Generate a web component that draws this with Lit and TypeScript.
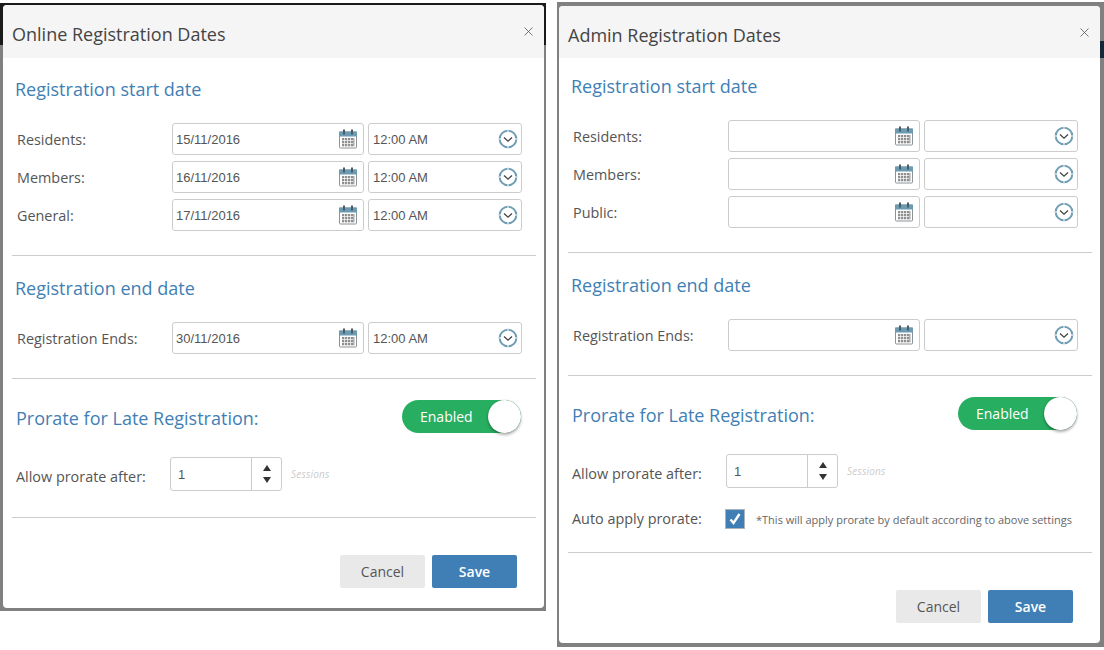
import { LitElement, html, css, nothing, svg } from "lit";
import { customElement, property } from "lit/decorators.js";

const calendarIcon = svg`<svg class="ico" width="20" height="20" viewBox="0 0 20 20">
  <rect x="1.5" y="3" width="17" height="16" rx="1" fill="#fff" stroke="#8c9499"/>
  <rect x="1" y="2.5" width="18" height="5" fill="#6b9ab3"/>
  <rect x="5" y="0.5" width="2" height="5" fill="#4f5b63"/>
  <rect x="13" y="0.5" width="2" height="5" fill="#4f5b63"/>
  <g fill="#8f8f8f">
    ${[4, 7, 10, 13].flatMap((x) => [9, 12, 15].map((y) => svg`<rect x="${x}" y="${y}" width="2.3" height="2.3"/>`))}
    <rect x="15.4" y="9" width="1" height="8.3"/>
  </g>
</svg>`;

const clockIcon = svg`<svg class="ico" width="20" height="20" viewBox="0 0 20 20">
  <circle cx="10" cy="10" r="8.3" fill="#fff" stroke="#6f9db4" stroke-width="2"/>
  <path d="M10 1v2M10 17v2M1 10h2M17 10h2" stroke="#fff" stroke-width="1"/>
  <path d="M6 8.6l4 3.6 4-3.6" fill="none" stroke="#444" stroke-width="1.3"/>
</svg>`;

@customElement("reg-dialog")
class RegDialog extends LitElement {
  @property() heading = "";
  @property() variant = "online";
  @property({ type: Array }) starts: [string, string, string][] = [];
  @property({ type: Array }) end: [string, string, string] = ["", "", ""];

  static styles = css`
    :host { display: block; }
    * { box-sizing: border-box; }
    .frame { font-family: "Open Sans", sans-serif; color: #555; }
    .frame.online {
      width: 546px;
      padding: 2px 2px 3px 3px;
      background: linear-gradient(#1a1a1a 0 42px, #808080 42px);
    }
    .frame.admin {
      width: 547px;
      padding: 4px 4px 4px 2px;
      background: linear-gradient(#14283a, #14283a) right 39px / 4px 17px no-repeat, #808080;
    }
    .inner { background: #fff; border-radius: 4px; overflow: hidden; }
    .head {
      display: flex;
      justify-content: space-between;
      align-items: flex-start;
      background: #f5f5f5;
      padding: 17px 11px 0 9px;
    }
    .online .head { height: 53px; }
    .admin .head { height: 52px; }
    .title { font-size: 18px; line-height: 25px; color: #444; }
    .close { width: 9px; height: 9px; margin-top: 5px; display: block; }
    .body { padding: 19px 8px 0 9px; }
    .admin .body { padding-top: 16px; }
    h3 {
      margin: 0 0 22px;
      font-size: 18px;
      line-height: 24px;
      font-weight: 400;
      color: #3f7fb5;
      padding-left: 3px;
    }
    .rows { display: flex; flex-direction: column; gap: 6px; }
    .row {
      display: grid;
      grid-template-columns: 160px 192px 158px;
      align-items: center;
    }
    .row > .time { margin-left: 4px; }
    .lbl { font-size: 14.4px; padding-left: 5px; color: #555; }
    .field {
      height: 32px;
      border: 1px solid #ccc;
      border-radius: 3px;
      display: flex;
      align-items: center;
      justify-content: space-between;
      padding: 0 3px 0 4px;
      font: 13px "Liberation Sans", sans-serif;
      color: #555;
      background: #fff;
    }
    .field.date { padding-right: 5px; padding-left: 3px; }
    .ico { display: block; }
    hr { border: 0; border-top: 1px solid #ccc; margin: 24px 0 0; height: 1px; }
    .sec { margin-top: 20px; }
    .pro {
      display: flex;
      justify-content: space-between;
      align-items: flex-start;
      margin-top: 21px;
      padding-right: 15px;
    }
    .pro h3 { margin: 6px 0 0; padding-left: 4px; }
    .toggle {
      width: 119px;
      height: 33px;
      border-radius: 17px;
      background: #27ae60;
      color: #fff;
      font-size: 14px;
      display: flex;
      align-items: center;
      justify-content: space-between;
      padding-left: 18px;
    }
    .knob {
      width: 33px;
      height: 33px;
      border-radius: 50%;
      background: #fff;
      box-shadow: 0 2px 3px rgba(0,0,0,.3), 0 0 1px rgba(0,0,0,.4);
    }
    .after {
      display: flex;
      align-items: center;
      margin-top: 24px;
    }
    .after .lbl { width: 158px; padding-top: 5px; padding-left: 4px; }
    .spin {
      width: 112px;
      height: 34px;
      border: 1px solid #ccc;
      border-radius: 3px;
      display: flex;
      font: 13px "Liberation Sans", sans-serif;
      color: #555;
    }
    .spin .val { flex: 1; padding: 9px 0 0 7px; }
    .spin .step {
      width: 30px;
      border-left: 1px solid #ccc;
      display: flex;
      flex-direction: column;
      align-items: center;
      justify-content: center;
      gap: 6px;
    }
    .up, .dn { width: 0; height: 0; border-left: 4px solid transparent; border-right: 4px solid transparent; }
    .up { border-bottom: 6px solid #333; }
    .dn { border-top: 6px solid #333; }
    .unit { font-size: 10px; font-style: italic; color: #ccc; margin-left: 9px; letter-spacing: .2px; }
    .auto {
      display: flex;
      align-items: center;
      margin-top: 21px;
    }
    .auto .lbl { width: 158px; padding-left: 4px; margin-top: -2px; }
    .check {
      width: 20px;
      height: 20px;
      margin-left: -1px;
      background: #3f7fb5;
      border: 1px solid #a9b4bd;
      display: flex;
      align-items: center;
      justify-content: center;
    }
    .note { font-size: 11px; color: #666; margin-left: 11px; }
    .online .last { margin-top: 26px; }
    .admin .last { margin-top: 23px; }
    .foot {
      display: flex;
      justify-content: flex-end;
      gap: 7px;
      padding: 37px 27px 20px 0;
    }
    .btn {
      width: 85px;
      height: 33px;
      border-radius: 2px;
      font-size: 14px;
      display: flex;
      align-items: center;
      justify-content: center;
    }
    .cancel { background: #e9e9e9; color: #555; }
    .save { background: #3f7fb5; color: #fff; font-weight: 600; }
  `;

  private row(r: [string, string, string]) {
    return html`<div class="row">
      <span class="lbl">${r[0]}</span>
      <div class="field date"><span>${r[1]}</span>${calendarIcon}</div>
      <div class="field time"><span>${r[2]}</span>${clockIcon}</div>
    </div>`;
  }

  render() {
    return html`<div class="frame ${this.variant}">
      <div class="inner">
        <div class="head">
          <span class="title">${this.heading}</span>
          <svg class="close" viewBox="0 0 9 9"><path d="M.5.5l8 8M8.5.5l-8 8" stroke="#555" stroke-width=".8" fill="none"/></svg>
        </div>
        <div class="body">
          <h3>Registration start date</h3>
          <div class="rows">${this.starts.map((r) => this.row(r))}</div>
          <hr />
          <h3 class="sec">Registration end date</h3>
          <div class="rows">${this.row(this.end)}</div>
          <hr />
          <div class="pro">
            <h3>Prorate for Late Registration:</h3>
            <div class="toggle"><span>Enabled</span><span class="knob"></span></div>
          </div>
          <div class="after">
            <span class="lbl">Allow prorate after:</span>
            <div class="spin">
              <span class="val">1</span>
              <span class="step"><i class="up"></i><i class="dn"></i></span>
            </div>
            <span class="unit">Sessions</span>
          </div>
          ${this.variant === "admin"
            ? html`<div class="auto">
                <span class="lbl">Auto apply prorate:</span>
                <span class="check"><svg width="14" height="14" viewBox="0 0 14 14"><path d="M2.5 7.5l3 3.5 6-9" fill="none" stroke="#fff" stroke-width="2.4"/></svg></span>
                <span class="note">*This will apply prorate by default according to above settings</span>
              </div>`
            : nothing}
          <hr class="last" />
        </div>
        <div class="foot">
          <div class="btn cancel">Cancel</div>
          <div class="btn save">Save</div>
        </div>
      </div>
    </div>`;
  }
}

@customElement("app-root")
export class AppRoot extends LitElement {
  static styles = css`
    :host { display: block; background: #fff; min-height: 650px; }
    .page { display: flex; align-items: flex-start; gap: 11px; padding-top: 2px; }
    .first { margin-top: 1px; }
  `;
  render() {
    return html`<div class="page">
      <reg-dialog class="first" heading="Online Registration Dates" variant="online"
        .starts=${[["Residents:", "15/11/2016", "12:00 AM"], ["Members:", "16/11/2016", "12:00 AM"], ["General:", "17/11/2016", "12:00 AM"]]}
        .end=${["Registration Ends:", "30/11/2016", "12:00 AM"]}></reg-dialog>
      <reg-dialog heading="Admin Registration Dates" variant="admin"
        .starts=${[["Residents:", "", ""], ["Members:", "", ""], ["Public:", "", ""]]}
        .end=${["Registration Ends:", "", ""]}></reg-dialog>
    </div>`;
  }
}
void RegDialog;
